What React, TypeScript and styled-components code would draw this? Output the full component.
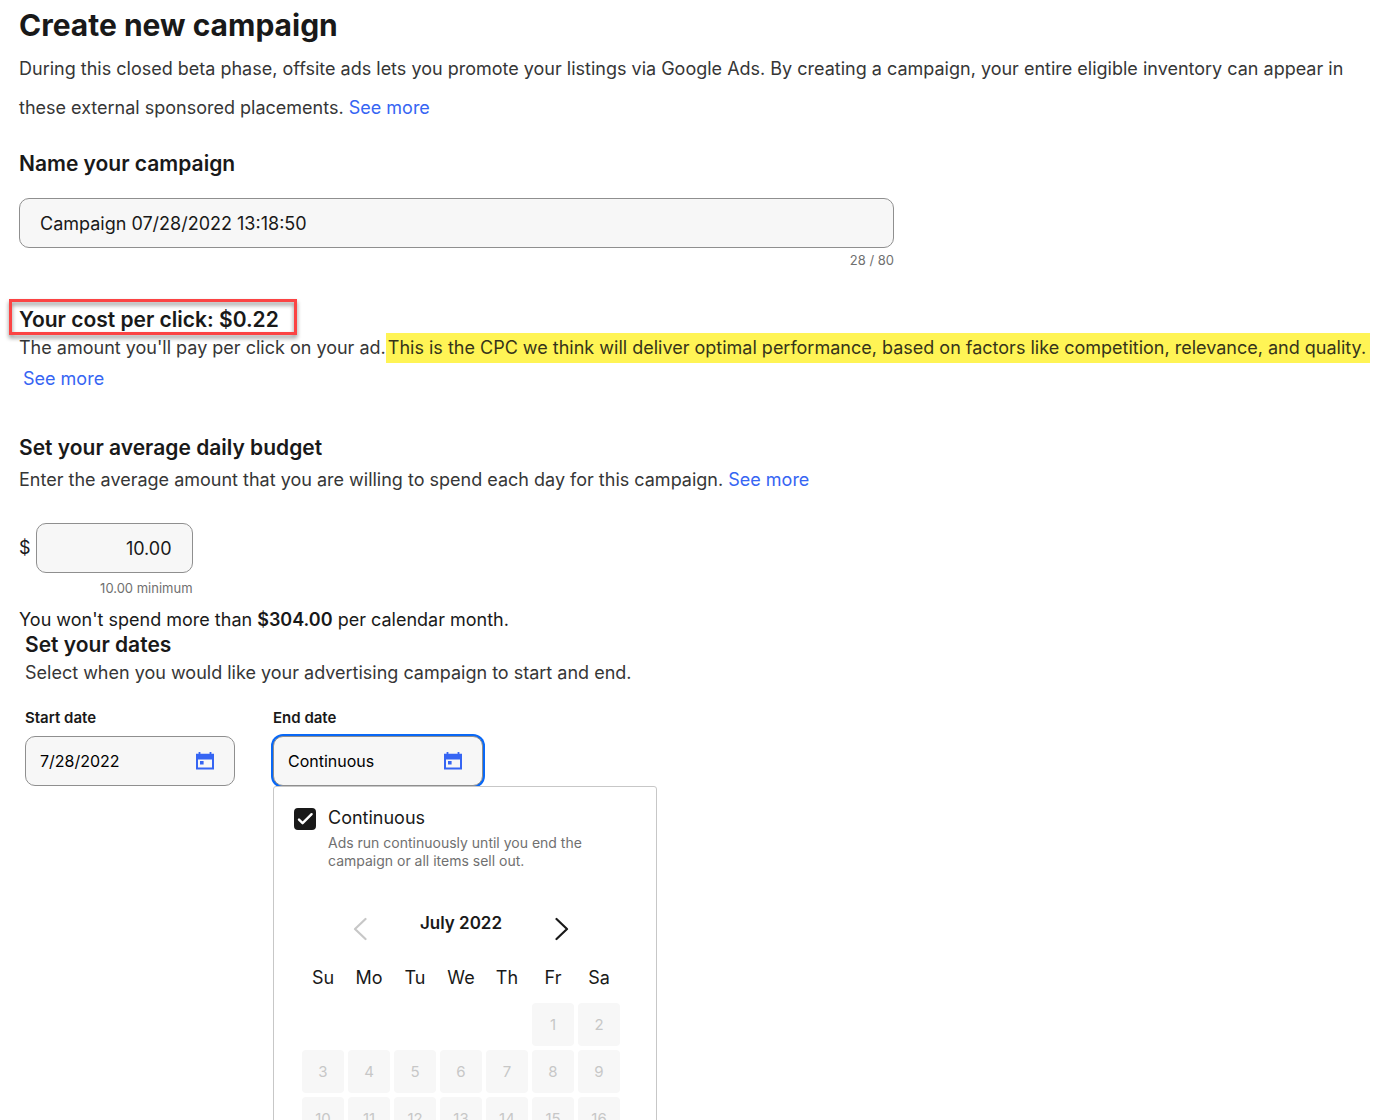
import React, { useState } from "react";
import styled, { createGlobalStyle } from "styled-components";

const GlobalStyle = createGlobalStyle`
  *, *::before, *::after { box-sizing: border-box; }
  body {
    margin: 0;
    background: #fff;
    color: #191919;
    font-family: Inter, "Liberation Sans", sans-serif;
    font-size: 18px;
    line-height: 24px;
  }
  input, button { font: inherit; color: inherit; margin: 0; }
`;

const Page = styled.main`
  min-height: 100vh;
  padding: 7px 0 0 19px;
`;

const Title = styled.h1`
  margin: 0 0 6px;
  font-size: 30px;
  font-weight: 700;
  line-height: 36px;
`;

const Section = styled.section<{ $gap?: number; $indent?: number }>`
  margin-top: ${(p) => p.$gap ?? 0}px;
  padding-left: ${(p) => p.$indent ?? 0}px;
`;

const Heading = styled.h2`
  margin: 0;
  font-size: 21px;
  font-weight: 600;
  line-height: 24px;
`;

const HeadingLabel = styled.label`
  display: block;
`;

const CalloutHeading = styled(Heading)`
  position: relative;
  width: fit-content;

  &::after {
    content: "";
    position: absolute;
    inset: -9px -18px -3px -10px;
    border: 3px solid #fb4444;
    filter: drop-shadow(0 3px 2px rgba(0, 0, 0, 0.45));
    pointer-events: none;
  }
`;

const Text = styled.p<{ $line?: number; $top?: number }>`
  margin: ${(p) => p.$top ?? 0}px 0 0;
  color: #363636;
  line-height: ${(p) => p.$line ?? 31}px;
`;

const Marked = styled.mark`
  display: inline-block;
  margin-left: -5px;
  padding: 0 4px 0 2px;
  background: #fff455;
  color: #36341a;
  line-height: 30px;
`;

const Link = styled.a<{ $inset?: boolean }>`
  margin-left: ${(p) => (p.$inset ? 4 : 0)}px;
  color: #3665f3;
  text-decoration: none;
`;

const TextInput = styled.input`
  display: block;
  width: 100%;
  height: 50px;
  padding: 0 20px;
  border: 1px solid #8f8f8f;
  border-radius: 10px;
  background: #f7f7f7;
  outline: none;
`;

const NameField = styled.div`
  max-width: 875px;
  margin-top: 22px;
`;

const Hint = styled.div<{ $top: number }>`
  margin-top: ${(p) => p.$top}px;
  color: #707070;
  font-size: 13px;
  line-height: 18px;
  text-align: right;
`;

const BudgetField = styled.div`
  width: fit-content;
  margin-top: 28px;
`;

const BudgetRow = styled.div`
  display: flex;
  align-items: center;
  gap: 5px;
`;

const AmountInput = styled(TextInput)`
  width: 157px;
  text-align: right;
`;

const SpendNote = styled.p`
  margin: 11px 0 1px;

  strong { font-weight: 600; }
`;

const DateRow = styled.div`
  display: flex;
  flex-wrap: wrap;
  gap: 38px;
  margin-top: 20px;
`;

const DateField = styled.div`
  position: relative;
  width: 210px;
`;

const DateLabel = styled.label`
  display: block;
  margin-bottom: 8px;
  font-size: 15px;
  font-weight: 600;
  line-height: 20px;
`;

const DateBox = styled.div<{ $active?: boolean }>`
  display: flex;
  align-items: center;
  height: 50px;
  padding: 0 20px 0 14px;
  border: 1px solid #8f8f8f;
  border-radius: 10px;
  background: #f7f7f7;
  box-shadow: ${(p) => (p.$active ? "0 0 0 2px #0968f6" : "none")};
`;

const DateInput = styled.input`
  flex: 1;
  min-width: 0;
  padding: 0;
  border: 0;
  background: none;
  outline: none;
  color: #000;
  font-size: 16px;
`;

const IconButton = styled.button`
  display: grid;
  place-items: center;
  padding: 0;
  border: 0;
  background: none;
  color: #3665f3;
  cursor: pointer;
`;

const Popover = styled.div`
  position: absolute;
  top: 100%;
  left: 0;
  width: 384px;
  padding: 19px 20px 20px;
  border: 1px solid #c7c7c7;
  border-radius: 3px;
  background: #fff;
`;

const CheckRow = styled.div`
  display: flex;
  gap: 12px;
`;

const CheckBox = styled.span`
  display: grid;
  flex: none;
  width: 22px;
  height: 22px;
  margin-top: 2px;

  > * { grid-area: 1 / 1; }
  svg { pointer-events: none; z-index: 1; }
`;

const CheckInput = styled.input`
  appearance: none;
  width: 22px;
  height: 22px;
  border: 2px solid #191919;
  border-radius: 4px;

  &:checked { background: #191919; }
`;

const CheckNote = styled.p`
  margin: 4px 0 0;
  color: #707070;
  font-size: 14px;
  line-height: 18px;
`;

const Calendar = styled.div`
  width: 326px;
  margin: 41px 0 0 4px;
`;

const MonthBar = styled.div`
  display: flex;
  align-items: center;
  justify-content: space-between;
  height: 36px;
  margin-bottom: 6px;
  padding: 0 50px;
`;

const MonthName = styled.h3`
  align-self: flex-start;
  margin: 0;
  font-size: 17px;
  font-weight: 600;
`;

const MonthButton = styled(IconButton)`
  width: 24px;
  height: 24px;
  color: #191919;

  &:disabled { color: #c7c7c7; cursor: default; }
`;

const Days = styled.table`
  width: 100%;
  border-spacing: 4px;
  table-layout: fixed;

  th, td { padding: 0; }
  th { height: 42px; font-weight: 400; }
`;

const Day = styled.button`
  display: block;
  width: 100%;
  height: 43px;
  padding: 0;
  border: 0;
  border-radius: 4px;
  background: #f7f7f7;
  color: #c7c7c7;
  font-size: 15px;
`;

const CalendarIcon = () => (
  <svg width="18" height="18" viewBox="0 0 18 18" aria-hidden="true">
    <path
      fill="currentColor"
      fillRule="evenodd"
      d="M2.6 0h1.8v1.8h9.2V0h1.8v1.8H18V17.6H0V1.8h2.6V0ZM2 7.4v8.2h14V7.4H2ZM4 9h3.6v3.4H4V9Z"
    />
  </svg>
);

const Chevron = ({ flip }: { flip?: boolean }) => (
  <svg width="14" height="24" viewBox="0 0 14 24" fill="none" stroke="currentColor" strokeWidth="2.2" strokeLinecap="round" strokeLinejoin="round" aria-hidden="true">
    <path d={flip ? "M12.5 2 2 12l10.5 10" : "M1.5 2 12 12 1.5 22"} />
  </svg>
);

const weekdays = ["Su", "Mo", "Tu", "We", "Th", "Fr", "Sa"];
const firstWeekday = 5;
const weeks = Array.from({ length: 6 }, (_, w) =>
  weekdays.map((_, d) => {
    const day = w * 7 + d - firstWeekday + 1;
    return day > 0 && day <= 31 ? day : null;
  })
);

export default function App() {
  const [name, setName] = useState("Campaign 07/28/2022 13:18:50");
  const [budget, setBudget] = useState("10.00");
  const [continuous, setContinuous] = useState(true);

  return (
    <Page>
      <GlobalStyle />
      <Title>Create new campaign</Title>
      <Text $line={39}>
        During this closed beta phase, offsite ads lets you promote your listings via Google Ads. By creating a
        campaign, your entire eligible inventory can appear in these external sponsored placements.{" "}
        <Link href="#about">See more</Link>
      </Text>

      <Section $gap={25}>
        <Heading>
          <HeadingLabel htmlFor="name">Name your campaign</HeadingLabel>
        </Heading>
        <NameField>
          <TextInput id="name" maxLength={80} value={name} onChange={(e) => setName(e.target.value)} />
          <Hint $top={3}>{name.length} / 80</Hint>
        </NameField>
      </Section>

      <Section $gap={39}>
        <CalloutHeading>Your cost per click: $0.22</CalloutHeading>
        <Text>
          The amount you'll pay per click on your ad.{" "}
          <Marked>
            This is the CPC we think will deliver optimal performance, based on factors like competition, relevance,
            and quality.
          </Marked>{" "}
          <Link $inset href="#cpc">See more</Link>
        </Text>
      </Section>

      <Section $gap={42}>
        <Heading>Set your average daily budget</Heading>
        <Text $top={4}>
          Enter the average amount that you are willing to spend each day for this campaign.{" "}
          <Link href="#budget">See more</Link>
        </Text>
        <BudgetField>
          <BudgetRow>
            <label htmlFor="budget">$</label>
            <AmountInput id="budget" inputMode="decimal" value={budget} onChange={(e) => setBudget(e.target.value)} />
          </BudgetRow>
          <Hint $top={6}>10.00 minimum</Hint>
        </BudgetField>
        <SpendNote>
          You won't spend more than <strong>$304.00</strong> per calendar month.
        </SpendNote>
      </Section>

      <Section $indent={6}>
        <Heading>Set your dates</Heading>
        <Text>Select when you would like your advertising campaign to start and end.</Text>
        <DateRow>
          <DateField>
            <DateLabel htmlFor="start">Start date</DateLabel>
            <DateBox>
              <DateInput id="start" defaultValue="7/28/2022" />
              <IconButton type="button" aria-label="Choose start date">
                <CalendarIcon />
              </IconButton>
            </DateBox>
          </DateField>
          <DateField>
            <DateLabel htmlFor="end">End date</DateLabel>
            <DateBox $active>
              <DateInput id="end" readOnly value={continuous ? "Continuous" : ""} />
              <IconButton type="button" aria-label="Choose end date">
                <CalendarIcon />
              </IconButton>
            </DateBox>
            <Popover>
              <CheckRow>
                <CheckBox>
                  <CheckInput
                    id="continuous"
                    type="checkbox"
                    checked={continuous}
                    onChange={(e) => setContinuous(e.target.checked)}
                  />
                  <svg width="22" height="22" viewBox="0 0 22 22" fill="none" stroke="#fff" strokeWidth="2.4" strokeLinecap="round" strokeLinejoin="round" aria-hidden="true">
                    <path d="M5 11.6 8.6 15.2 17.6 6.2" />
                  </svg>
                </CheckBox>
                <div>
                  <label htmlFor="continuous">Continuous</label>
                  <CheckNote>
                    Ads run continuously until you end the
                    <br />
                    campaign or all items sell out.
                  </CheckNote>
                </div>
              </CheckRow>
              <Calendar>
                <MonthBar>
                  <MonthButton type="button" disabled aria-label="Previous month">
                    <Chevron flip />
                  </MonthButton>
                  <MonthName>July 2022</MonthName>
                  <MonthButton type="button" aria-label="Next month">
                    <Chevron />
                  </MonthButton>
                </MonthBar>
                <Days>
                  <thead>
                    <tr>
                      {weekdays.map((d) => (
                        <th key={d} scope="col">{d}</th>
                      ))}
                    </tr>
                  </thead>
                  <tbody>
                    {weeks.map((week, i) => (
                      <tr key={i}>
                        {week.map((day, j) => (
                          <td key={j}>{day && <Day type="button" disabled>{day}</Day>}</td>
                        ))}
                      </tr>
                    ))}
                  </tbody>
                </Days>
              </Calendar>
            </Popover>
          </DateField>
        </DateRow>
      </Section>
    </Page>
  );
}
